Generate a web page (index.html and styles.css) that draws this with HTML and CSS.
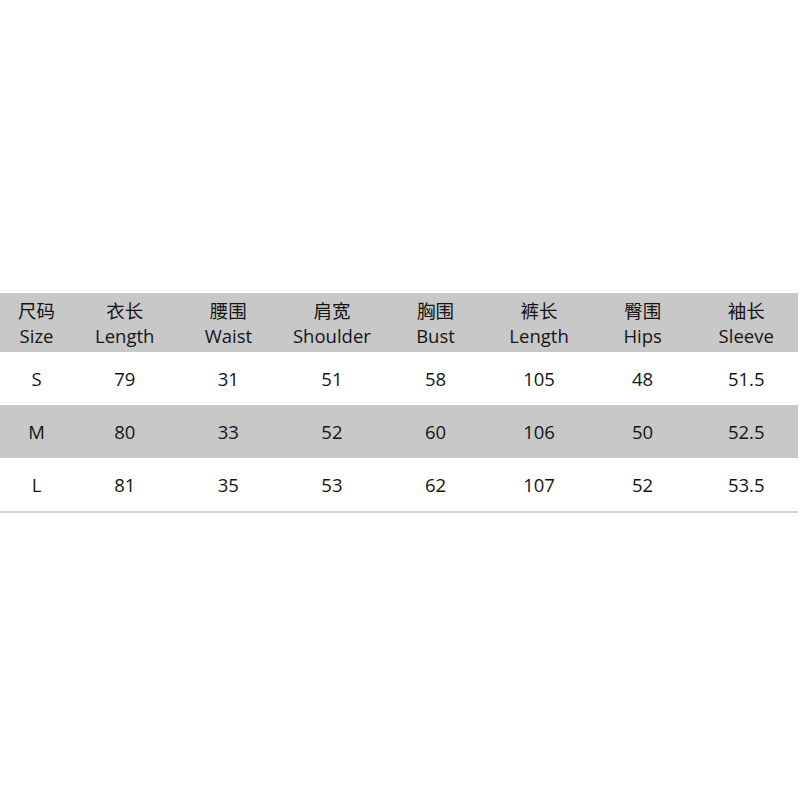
FILE: index.html
```html
<!DOCTYPE html>
<html lang="zh">
<head>
<meta charset="utf-8">
<link rel="stylesheet" href="styles.css">
</head>
<body>
<div class="page">
  <div class="table">
    <div class="row head">
      <div class="cell">尺码<br>Size</div>
      <div class="cell">衣长<br>Length</div>
      <div class="cell">腰围<br>Waist</div>
      <div class="cell">肩宽<br>Shoulder</div>
      <div class="cell">胸围<br>Bust</div>
      <div class="cell">裤长<br>Length</div>
      <div class="cell">臀围<br>Hips</div>
      <div class="cell">袖长<br>Sleeve</div>
    </div>
    <div class="row">
      <div class="cell">S</div><div class="cell">79</div><div class="cell">31</div><div class="cell">51</div>
      <div class="cell">58</div><div class="cell">105</div><div class="cell">48</div><div class="cell">51.5</div>
    </div>
    <div class="row shade">
      <div class="cell">M</div><div class="cell">80</div><div class="cell">33</div><div class="cell">52</div>
      <div class="cell">60</div><div class="cell">106</div><div class="cell">50</div><div class="cell">52.5</div>
    </div>
    <div class="row">
      <div class="cell">L</div><div class="cell">81</div><div class="cell">35</div><div class="cell">53</div>
      <div class="cell">62</div><div class="cell">107</div><div class="cell">52</div><div class="cell">53.5</div>
    </div>
  </div>
</div>
</body>
</html>
```
FILE: styles.css
```css
html, body {
  margin: 0;
  padding: 0;
  background: #ffffff;
}
.page {
  width: 800px;
  height: 800px;
  padding-top: 293px;
  box-sizing: border-box;
}
.table {
  width: 798px;
  border-bottom: 2px solid #cfcfcf;
  font-family: "Open Sans", "Noto Sans CJK SC", sans-serif;
  color: #151515;
  font-size: 18.5px;
  font-weight: 400;
}
.row {
  display: grid;
  grid-template-columns: 73px repeat(7, 1fr);
  height: 53px;
  align-items: center;
}
.row.head {
  height: 59px;
  background: #c8c8c8;
  line-height: 25px;
}
.row.shade {
  background: #c8c8c8;
}
.cell {
  text-align: center;
}
```
